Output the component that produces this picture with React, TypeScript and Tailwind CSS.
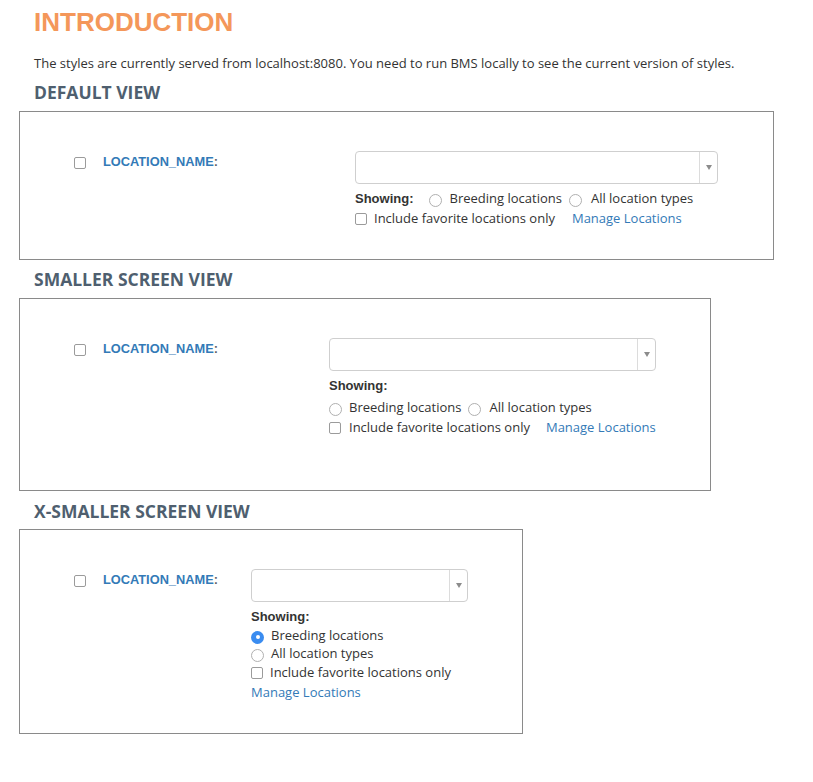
import React from 'react';

const body = { fontFamily: '"Open Sans", "Liberation Sans", sans-serif' };

function Check() {
  return <span className="inline-block w-[12px] h-[12px] shrink-0 rounded-[2px] border border-[#9b9b9b] bg-white" />;
}

function Radio({ checked = false }: { checked?: boolean }) {
  if (checked) {
    return (
      <span className="mt-[2px] inline-flex w-[13px] h-[13px] shrink-0 items-center justify-center rounded-full bg-[#3a8cf0]">
        <span className="w-[4px] h-[4px] rounded-full bg-white" />
      </span>
    );
  }
  return <span className="mt-[2px] inline-block w-[13px] h-[13px] shrink-0 rounded-full border border-[#b0b0b0] bg-white" />;
}

function Select() {
  return (
    <div className="flex h-[33px] rounded-[4px] border border-[#cfcfcf] bg-white">
      <div className="flex-1" />
      <div className="flex w-[18px] items-center justify-center border-l border-[#dcdcdc]">
        <span className="w-0 h-0 border-l-[3px] border-r-[3px] border-t-[5px] border-l-transparent border-r-transparent border-t-[#8c8c8c]" />
      </div>
    </div>
  );
}

function Heading({ children }: { children: React.ReactNode }) {
  return (
    <h2 className="ml-[15px] text-[17.5px] leading-[20px] font-bold text-[#4f5f6f]" style={body}>
      {children}
    </h2>
  );
}

function LeftLabel({ width }: { width: string }) {
  return (
    <div className={`${width} shrink-0 flex items-start pt-[3px] pl-[54px] gap-[17px]`}>
      <span className="mt-[1px]">
        <Check />
      </span>
      <span className="text-[12.8px] leading-[16px] font-bold" style={{ fontFamily: '"Liberation Sans", Arial, sans-serif' }}>
        <span className="text-[#337ab7]">LOCATION_NAME</span>
        <span className="text-[#666]">:</span>
      </span>
    </div>
  );
}

function Showing() {
  return (
    <span className="text-[13px] font-bold text-[#333]" style={{ fontFamily: '"Liberation Sans", Arial, sans-serif' }}>
      Showing:
    </span>
  );
}

const link = 'text-[#337ab7]';

export default function App() {
  return (
    <div className="min-h-[782px] bg-white pl-[19px] text-[13px] text-[#333]" style={body}>
      <h1
        className="pt-[7px] ml-[15px] text-[26px] leading-[30px] font-bold text-[#f4975a]"
        style={{ fontFamily: '"Liberation Sans", Arial, sans-serif' }}
      >
        INTRODUCTION
      </h1>
      <p className="mt-[17px] ml-[15px] leading-[18px]">
        The styles are currently served from localhost:8080. You need to run BMS locally to see the current version of
        styles.
      </p>

      <div className="mt-[10px]">
        <Heading>DEFAULT VIEW</Heading>
      </div>
      <div className="mt-[9px] flex w-[755px] h-[149px] border border-[#8a8a8a] pt-[39px]">
        <LeftLabel width="w-[335px]" />
        <div className="w-[363px] shrink-0">
          <Select />
          <div className="mt-[5px] flex h-[20px] items-center">
            <Showing />
            <span className="ml-[15px] flex"><Radio /></span>
            <span className="ml-[8px]">Breeding locations</span>
            <span className="ml-[7px] flex"><Radio /></span>
            <span className="ml-[9px]">All location types</span>
          </div>
          <div className="flex h-[20px] items-center">
            <Check />
            <span className="ml-[7px]">Include favorite locations only</span>
            <a className={`ml-[17px] ${link}`}>Manage Locations</a>
          </div>
        </div>
      </div>

      <div className="mt-[9px]">
        <Heading>SMALLER SCREEN VIEW</Heading>
      </div>
      <div className="mt-[9px] flex w-[692px] h-[193px] border border-[#8a8a8a] pt-[39px]">
        <LeftLabel width="w-[309px]" />
        <div className="w-[327px] shrink-0">
          <Select />
          <div className="mt-[5px] h-[20px] flex items-center">
            <Showing />
          </div>
          <div className="mt-[2px] flex h-[20px] items-center">
            <Radio />
            <span className="ml-[7px]">Breeding locations</span>
            <span className="ml-[7px] flex"><Radio /></span>
            <span className="ml-[8px]">All location types</span>
          </div>
          <div className="flex h-[20px] items-center">
            <Check />
            <span className="ml-[8px]">Include favorite locations only</span>
            <a className={`ml-[16px] ${link}`}>Manage Locations</a>
          </div>
        </div>
      </div>

      <div className="mt-[10px]">
        <Heading>X-SMALLER SCREEN VIEW</Heading>
      </div>
      <div className="mt-[8px] flex w-[504px] h-[205px] border border-[#8a8a8a] pt-[39px]">
        <LeftLabel width="w-[231px]" />
        <div className="w-[217px] shrink-0">
          <Select />
          <div className="mt-[5px] h-[20px] flex items-center">
            <Showing />
          </div>
          <div className="flex h-[18px] items-center">
            <Radio checked />
            <span className="ml-[7px]">Breeding locations</span>
          </div>
          <div className="flex h-[18px] items-center">
            <Radio />
            <span className="ml-[7px]">All location types</span>
          </div>
          <div className="flex h-[20px] items-center">
            <Check />
            <span className="ml-[7px] whitespace-nowrap">Include favorite locations only</span>
          </div>
          <div className="flex h-[19px] items-center">
            <a className={link}>Manage Locations</a>
          </div>
        </div>
      </div>
    </div>
  );
}
